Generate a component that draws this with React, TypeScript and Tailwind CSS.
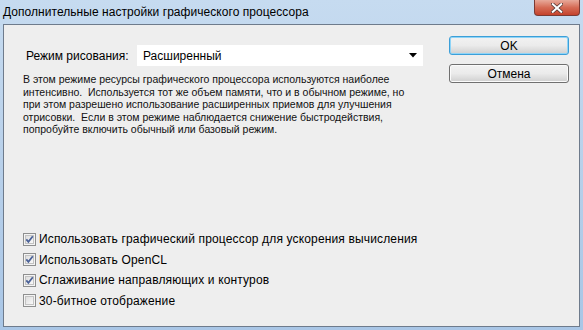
import React from 'react';

const Check = ({ checked }: { checked: boolean }) => (
  <svg width="13" height="13" viewBox="0 0 13 13" className="shrink-0">
    <defs>
      <linearGradient id="cbg" x1="0" y1="0" x2="1" y2="1">
        <stop offset="0" stopColor="#dcdcdc" />
        <stop offset="1" stopColor="#fbfbfb" />
      </linearGradient>
    </defs>
    <rect x="0.5" y="0.5" width="12" height="12" fill="#f4f4f4" stroke="#8e8f8f" />
    <rect x="2.5" y="2.5" width="8" height="8" fill="url(#cbg)" stroke="#c3c3c3" strokeWidth="1" />
    {checked && (
      <path d="M3.3 6.4 L5.4 8.9 L9.8 3.3" fill="none" stroke="#4b6298" strokeWidth="1.8" />
    )}
  </svg>
);

const Button = ({ label, focused }: { label: string; focused?: boolean }) => (
  <div
    className={`h-[19px] w-[120px] rounded-[3px] border flex items-center justify-center text-[12px] text-black bg-gradient-to-b from-[#f2f2f2] via-[#ebebeb] to-[#cfcfcf] ${
      focused ? 'border-[#3c9fd8] shadow-[inset_0_0_0_1px_#8fd4f7]' : 'border-[#707070] shadow-[inset_0_0_0_1px_#fbfbfb]'
    }`}
  >
    {label}
  </div>
);

export default function App() {
  const options = [
    { label: 'Использовать графический процессор для ускорения вычисления', checked: true },
    { label: 'Использовать OpenCL', checked: true },
    { label: 'Сглаживание направляющих и контуров', checked: true },
    { label: '30-битное отображение', checked: false },
  ];

  const lines = [
    'В этом режиме ресурсы графического процессора используются наиболее',
    'интенсивно.\u00a0 Используется тот же объем памяти, что и в обычном режиме, но',
    'при этом разрешено использование расширенных приемов для улучшения',
    'отрисовки.\u00a0 Если в этом режиме наблюдается снижение быстродействия,',
    'попробуйте включить обычный или базовый режим.',
  ];

  return (
    <div
      className="w-[583px] h-[330px] flex flex-col bg-gradient-to-b from-[#c6dbf0] via-[#b8d0ea] to-[#a9c6e6] overflow-hidden"
      style={{ fontFamily: '"Liberation Sans", Arial, sans-serif' }}
    >
      {/* title bar */}
      <div className="h-[24px] flex justify-between shrink-0">
        <div className="pl-[3px] pt-[3px] text-[12px] text-black tracking-[0.05px]">
          Дополнительные настройки графического процессора
        </div>
        <div className="mr-[3px] w-[46px] h-[16px] rounded-b-[4px] border border-t-0 border-[#7b3a33] bg-gradient-to-b from-[#e7a99a] via-[#d56b55] to-[#c4412b] flex items-center justify-center">
          <svg width="12" height="10" viewBox="0 0 12 10">
            <path d="M1.5 1 L10.5 9 M10.5 1 L1.5 9" stroke="#5a3a36" strokeWidth="3.6" strokeLinecap="square" />
            <path d="M1.8 1.2 L10.2 8.8 M10.2 1.2 L1.8 8.8" stroke="#ffffff" strokeWidth="2" strokeLinecap="square" />
          </svg>
        </div>
      </div>

      {/* client area */}
      <div className="mx-[3px] mb-[3px] flex-1 border border-[#6e7b8c] bg-[#eeeeee] flex">
        <div className="w-[440px] flex flex-col pl-[19px]">
          <div className="flex items-center mt-[20px] pl-[3px]">
            <span className="w-[111px] text-[12px] text-black">Режим рисования:</span>
            <div className="w-[286px] h-[21px] bg-white flex items-center justify-between pl-[6px] pr-[6px] text-[12px] text-black">
              <span>Расширенный</span>
              <svg width="8" height="5" viewBox="0 0 8 5">
                <path d="M0 0 H8 L4 4.5 Z" fill="#000" />
              </svg>
            </div>
          </div>
          <div className="mt-[7px] text-[10.5px] leading-[12.6px] text-[#111]">
            {lines.map((l) => (
              <div key={l} className="whitespace-pre">
                {l}
              </div>
            ))}
          </div>
          <div className="mt-auto mb-[19px] flex flex-col gap-[7.5px]">
            {options.map((o) => (
              <div key={o.label} className="flex items-center gap-[3px] h-[13px]">
                <Check checked={o.checked} />
                <span className="text-[12px] text-black whitespace-nowrap tracking-[0.15px]">{o.label}</span>
              </div>
            ))}
          </div>
        </div>
        <div className="flex flex-col gap-[9px] pt-[11px] pl-[5px]">
          <Button label="OK" focused />
          <Button label="Отмена" />
        </div>
      </div>
    </div>
  );
}
